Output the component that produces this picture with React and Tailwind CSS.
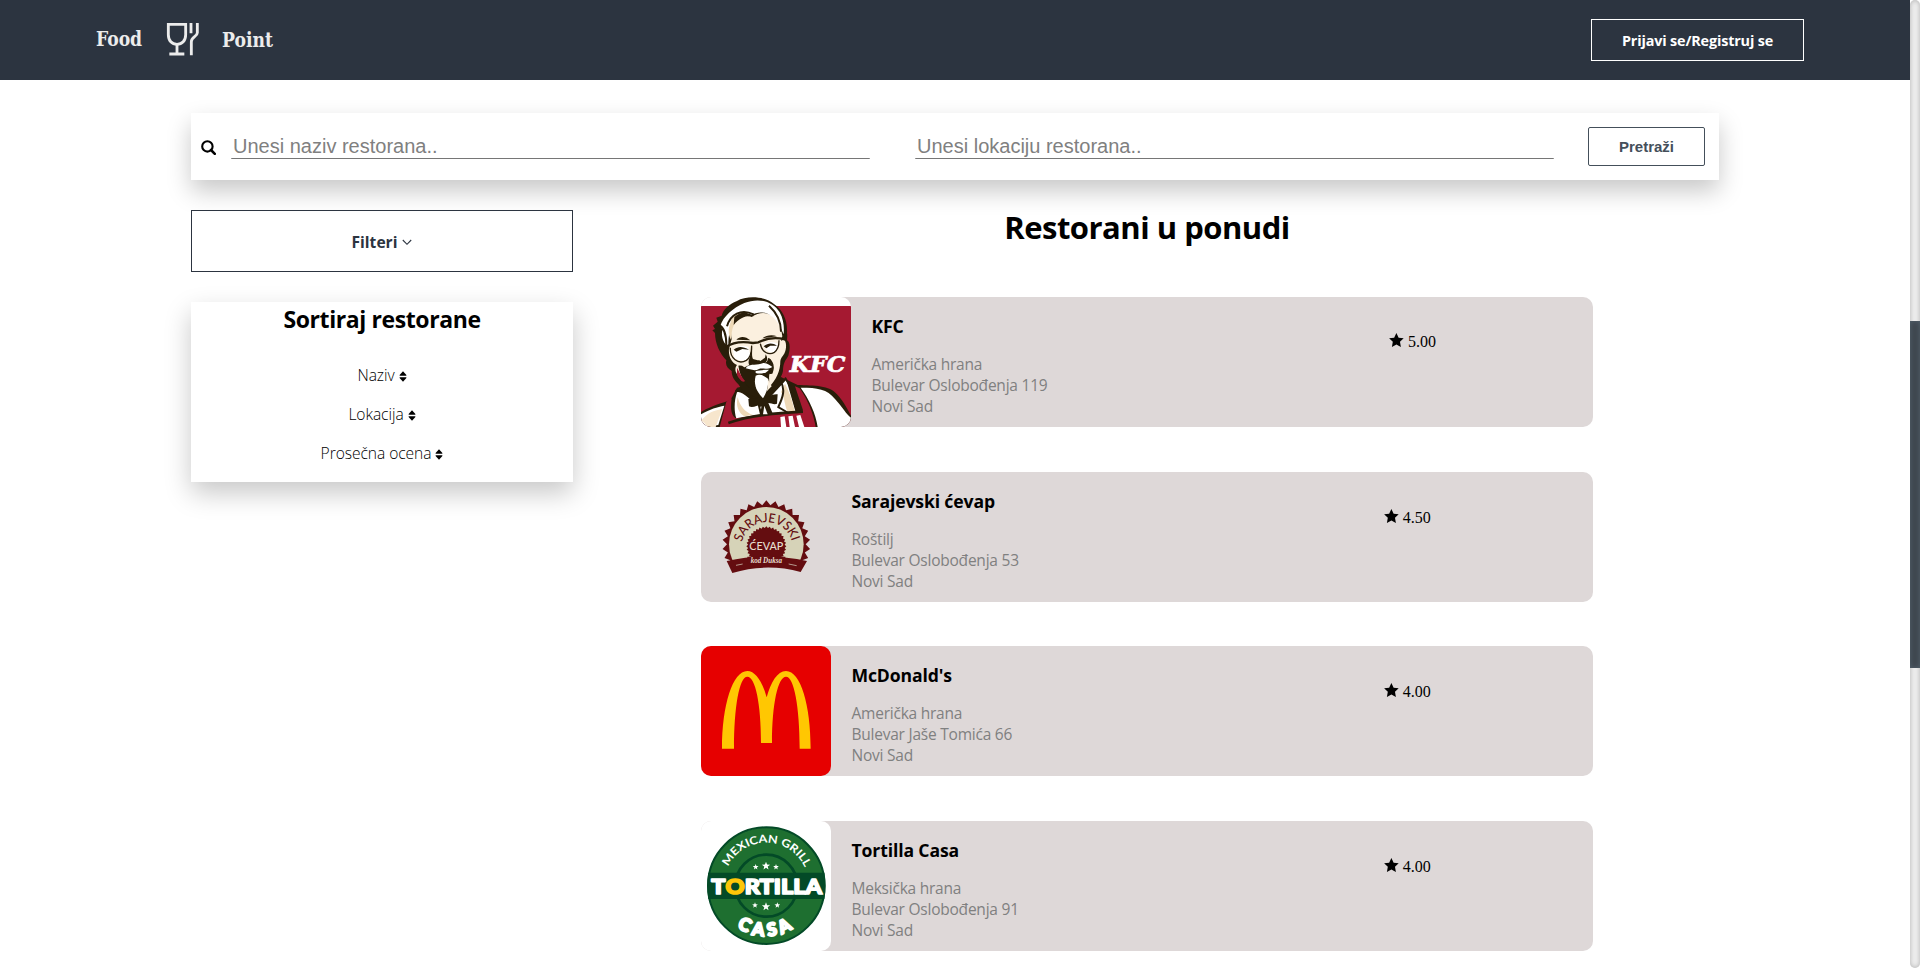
import React from "react";

function GlassLogo() {
  return (
    <svg viewBox="256 66 105 105" className="h-[35px] w-[35px] shrink-0" fill="none" stroke="#ececec" strokeWidth="8.5">
      <path d="M266 73H318V104C318 122 307 133 292 133C277 133 266 122 266 104Z" />
      <path d="M292 133V158M269 162H314" />
      <path d="M334 69V100M353 69V98C353 110 335 110 335 125V166" />
    </svg>
  );
}

function SearchIcon() {
  return (
    <svg viewBox="0 0 15 15" className="h-[15px] w-[15px] shrink-0 translate-y-[1px]" fill="none" stroke="#000" strokeWidth="2.1">
      <circle cx="6.4" cy="6.4" r="5.2" />
      <path d="M10 10L13.8 13.8" strokeWidth="2.5" strokeLinecap="round" />
    </svg>
  );
}

function SortIcon() {
  return (
    <svg viewBox="0 0 8 12" className="ml-[4px] h-[11px] w-[8px] shrink-0 translate-y-[1px]">
      <path d="M4 0.4L7.7 4.4Q8 5.1 7.3 5.1H0.7Q0 5.1 0.3 4.4Z" />
      <path d="M4 11.6L7.7 7.6Q8 6.9 7.3 6.9H0.7Q0 6.9 0.3 7.6Z" />
    </svg>
  );
}

function StarIcon() {
  return (
    <svg viewBox="0 0 26 25" className="h-[14px] w-[14.8px] shrink-0">
      <path d="M13 0L17 8.3L26 9.4L19.4 15.7L21 24.8L13 20.4L5 24.8L6.6 15.7L0 9.4L9 8.3Z" />
    </svg>
  );
}

function KfcLogo() {
  return (
    <svg viewBox="0 0 450 390" className="block h-[130px] w-[150px] shrink-0 rounded-[10px]">
      <rect width="450" height="390" fill="#fff" />
      <rect y="27" width="450" height="363" fill="#a51931" />
      {/* jacket */}
      <path d="M0 345C35 325 65 318 88 310L108 272L240 240L290 264C340 266 385 264 408 292C430 316 442 342 450 356V390H0Z" fill="#291e0a" />
      <path d="M0 352C28 336 48 330 70 326L52 384L0 390Z" fill="#fff" />
      <path d="M0 372C20 345 42 340 64 336L44 390H18C14 380 8 374 0 372Z" fill="#f7e6cd" />
      <path d="M299 272C350 272 378 276 402 306C424 330 436 352 450 362V390H350C344 350 326 310 299 272Z" fill="#fff" />
      {/* apron */}
      <path d="M76 314L92 304C88 336 90 352 104 364L290 346L306 340L282 268L296 274C322 312 338 352 344 390H56Z" fill="#a51931" />
      {/* shirt */}
      <path d="M108 286C120 278 150 312 180 330L256 248L284 346C220 348 160 352 106 364C98 340 100 310 108 286Z" fill="#fff" />
      <path d="M110 300C116 325 130 345 156 354L130 358C110 345 104 322 110 300ZM252 260C268 290 276 320 282 346L262 348C250 330 252 300 240 285Z" fill="#eed9b7" />
      <path d="M104 282C116 270 136 290 152 306L172 318L180 352M238 252C254 276 246 300 232 330L262 348M252 242C274 272 284 310 290 348" fill="none" stroke="#291e0a" strokeWidth="6" />
      <path d="M82 378C150 354 226 348 306 344" fill="none" stroke="#291e0a" strokeWidth="8" />
      {/* head silhouette */}
      <path d="M36 86L50 74L46 62L62 56C66 38 84 22 108 12C136 -4 190 -4 220 22C246 40 260 70 258 108C260 118 258 124 258 130C268 134 268 156 262 176C254 190 246 196 246 222C242 244 224 262 204 286L182 304C150 300 126 286 112 262C100 250 92 238 92 222C80 214 72 204 76 190C58 172 42 140 42 108L34 100L42 96Z" fill="#291e0a" />
      {/* face */}
      <path d="M92 126C86 98 94 72 112 58C124 58 140 54 152 60C168 48 186 46 200 50C226 58 240 82 244 118L240 132C252 122 258 138 254 158C250 176 240 178 238 192C238 222 226 248 204 270C204 256 206 240 202 232L214 226C220 210 214 192 206 184C198 202 186 198 174 190C162 196 152 200 140 206L128 212L122 242C104 234 98 216 108 204C90 196 82 176 84 156Z" fill="#fbf0df" />
      {/* hair */}
      <path d="M58 86C66 60 96 32 130 18C170 2 214 10 236 46C248 68 250 90 248 112C236 84 224 62 200 50C182 44 166 46 150 54C126 50 112 58 100 72C86 92 82 116 82 148C66 138 60 118 64 98Z" fill="#fff" />
      <path d="M88 78C92 60 106 48 132 46C118 56 106 68 100 82C92 96 92 112 90 128C80 112 82 94 88 78Z" fill="#eed9b7" />
      <path d="M54 84C70 92 76 110 76 144M78 88C88 52 120 34 158 52M204 26C226 46 240 72 240 104" fill="none" stroke="#291e0a" strokeWidth="6" />
      <path d="M100 60C118 42 142 44 158 58C136 54 116 62 98 84Z" fill="#291e0a" />
      {/* eyes and glasses */}
      <path d="M96 160C112 144 130 146 142 150L148 176C138 194 114 194 100 182ZM188 144C204 130 222 134 234 142L230 160C218 172 196 168 188 144Z" fill="#fff" />
      <path d="M74 150C98 134 124 132 156 138L172 136C194 124 216 120 250 126" fill="none" stroke="#291e0a" strokeWidth="7" />
      <path d="M88 152C86 184 112 204 136 190C148 182 152 166 152 146M178 140C182 166 204 176 220 166C232 158 234 142 234 130" fill="none" stroke="#291e0a" strokeWidth="4" />
      <path d="M98 158C112 146 126 148 144 158L124 156L106 164ZM188 148C202 136 216 138 228 146L208 146L196 154ZM106 128C118 116 134 118 148 130ZM184 124C196 114 214 112 228 118Z" fill="#291e0a" />
      {/* nose and smile */}
      <path d="M152 142C156 160 150 174 156 186L178 192L192 182L194 172C202 184 200 198 184 200L146 206C136 194 152 180 152 142ZM202 182C216 192 224 206 214 230L204 232C212 214 208 200 198 194Z" fill="#291e0a" />
      <path d="M112 206C124 204 132 210 138 222L166 226L204 222C206 236 204 250 198 262C192 246 178 240 162 240L162 280C140 274 118 248 112 206Z" fill="#291e0a" />
      <path d="M108 212C116 226 122 240 132 252C126 260 114 246 108 234Z" fill="#a51931" />
      <path d="M134 214C142 198 162 206 180 200C194 194 206 204 214 210C196 220 184 212 174 216C160 224 146 216 134 214Z" fill="#fff" />
      <path d="M164 222C176 220 190 218 204 218C198 228 178 232 164 228Z" fill="#fff" />
      {/* goatee */}
      <path d="M164 236C178 228 192 238 202 246C202 270 196 288 186 304C170 288 156 266 164 236Z" fill="#fff" />
      <path d="M200 246C202 264 200 276 196 284L212 268" fill="#fbf0df" />
      {/* bow tie */}
      <path d="M142 306C154 300 168 306 182 308C198 302 212 290 230 292L228 320C220 324 210 318 202 318L216 352H178L182 324C170 322 158 334 144 328Z" fill="#291e0a" />
      <path d="M190 326L200 352H186Z" fill="#fff" />
      {/* apron stripes */}
      <path d="M238 360L251 358L256 390H240ZM262 358L275 356L282 390H266ZM286 356L298 354L310 390H294Z" fill="#fff" />
      <text x="266" y="226" textLength="167" lengthAdjust="spacingAndGlyphs" fill="#fff" stroke="#fff" strokeWidth="2" className="font-['DejaVu_Serif'] text-[66px] font-bold italic">KFC</text>
    </svg>
  );
}

const TEETH = Array.from({ length: 60 }, (_, i) => {
  const a = (i * Math.PI * 2) / 60 - Math.PI / 2;
  const r = i % 2 ? 118 : 132;
  return `${(229 + r * Math.cos(a)).toFixed(1)},${(253 + r * Math.sin(a)).toFixed(1)}`;
}).join(" ");

const INNER_TEETH = Array.from({ length: 72 }, (_, i) => {
  const a = (i * Math.PI * 2) / 72;
  const r = i % 2 ? 55 : 60;
  return `${(229 + r * Math.cos(a)).toFixed(1)},${(259 + r * Math.sin(a)).toFixed(1)}`;
}).join(" ");

function SarajevskiLogo() {
  return (
    <svg viewBox="33 36 390 390" className="block h-[130px] w-[130px] shrink-0">
      <defs>
        <clipPath id="badgeTop"><path d="M80 100H380V300L345 308Q229 272 115 308L80 300Z" /></clipPath>
        <path id="sarajevskiArc" d="M156 246A77 77 0 0 1 306 246" />
      </defs>
      <g clipPath="url(#badgeTop)">
        <polygon points={TEETH} fill="#640d10" />
        <circle cx="229" cy="253" r="112" fill="#d6d3b8" />
        <polygon points={INNER_TEETH} fill="#640d10" />
      </g>
      <path d="M110 303Q229 276 351 303L332 336Q229 308 127 339Z" fill="#640d10" />
      <path d="M172 290H286V310H172Z" fill="#640d10" />
      <text fill="#640d10" className="font-['Lato'] text-[38px] font-medium">
        <textPath href="#sarajevskiArc" textLength="204" lengthAdjust="spacingAndGlyphs">SARAJEVSKI</textPath>
      </text>
      <text x="178" y="270" textLength="102" lengthAdjust="spacingAndGlyphs" fill="#e6dfcf" className="font-['Lato'] text-[36px] font-medium">ĆEVAP</text>
      <text x="182" y="310" textLength="94" lengthAdjust="spacingAndGlyphs" fill="#e6dfcf" className="font-['Liberation_Serif'] text-[25px] font-bold italic">kod Duksa</text>
      <path d="M138 316L158 312M296 312L320 317" stroke="#b59a8e" strokeWidth="3" />
    </svg>
  );
}

function McDonaldsLogo() {
  return (
    <svg viewBox="33 33 390 390" className="block h-[130px] w-[130px] shrink-0 rounded-[10px]">
      <rect x="33" y="33" width="390" height="390" fill="#e60000" />
      <path d="M96 341C96 210 128 108 172 108C197 108 218 142 230 187C242 142 262 108 288 108C332 108 362 210 362 341H329C329 215 312 125 288 125C264 125 246 205 246 324H213C213 205 196 125 172 125C148 125 132 215 132 341Z" fill="#ffc702" />
    </svg>
  );
}

const STARS = [[197, 171, 9], [228, 168, 13], [258, 171, 9], [195, 286, 9], [228, 290, 13], [262, 286, 9]];

function starPoints([cx, cy, r]) {
  return Array.from({ length: 10 }, (_, i) => {
    const a = (i * Math.PI) / 5 - Math.PI / 2;
    const d = i % 2 ? r * 0.42 : r;
    return `${(cx + d * Math.cos(a)).toFixed(1)},${(cy + d * Math.sin(a)).toFixed(1)}`;
  }).join(" ");
}

function TortillaLogo() {
  return (
    <svg viewBox="33 33 390 390" className="block h-[130px] w-[130px] shrink-0 rounded-[10px]">
      <defs>
        <path id="grillArc" d="M114 170A127 127 0 0 1 349 185" />
        <path id="casaArc" d="M128 341A152 152 0 0 0 328 341" />
      </defs>
      <rect x="33" y="33" width="390" height="390" fill="#fff" />
      <circle cx="229" cy="227" r="175" fill="#1e6f30" stroke="#034a27" strokeWidth="6" />
      <circle cx="229" cy="227" r="93" fill="#1e6f30" stroke="#034a27" strokeWidth="8" />
      <path d="M55 188H403Q409 227 403 267H55Q49 227 55 188Z" fill="#034a27" />
      {STARS.map((s) => <polygon key={s.join()} points={starPoints(s)} fill="#fff" />)}
      <text fill="#fff" className="font-['Lato'] text-[33px] font-bold">
        <textPath href="#grillArc" textLength="288" lengthAdjust="spacingAndGlyphs">MEXICAN GRILL</textPath>
      </text>
      <text x="64" y="251" textLength="332" lengthAdjust="spacingAndGlyphs" fill="#fff" stroke="#fff" strokeWidth="5" strokeLinejoin="round" className="font-['Lato'] text-[64px] font-black">
        T<tspan fill="#fdc708" stroke="#fdc708">O</tspan>RTILLA
      </text>
      <text fill="#fff" stroke="#fff" strokeWidth="6" strokeLinejoin="round" className="font-['Lato'] text-[54px] font-black tracking-[12px]">
        <textPath href="#casaArc" startOffset="17">CASA</textPath>
      </text>
    </svg>
  );
}

const RESTAURANTS = [
  { name: "KFC", kind: "Američka hrana", street: "Bulevar Oslobođenja 119", city: "Novi Sad", rating: "5.00", Logo: KfcLogo },
  { name: "Sarajevski ćevap", kind: "Roštilj", street: "Bulevar Oslobođenja 53", city: "Novi Sad", rating: "4.50", Logo: SarajevskiLogo },
  { name: "McDonald's", kind: "Američka hrana", street: "Bulevar Jaše Tomića 66", city: "Novi Sad", rating: "4.00", Logo: McDonaldsLogo },
  { name: "Tortilla Casa", kind: "Meksička hrana", street: "Bulevar Oslobođenja 91", city: "Novi Sad", rating: "4.00", Logo: TortillaLogo },
];

function RestaurantCard({ name, kind, street, city, rating, Logo }) {
  return (
    <article className="group flex h-[130px] w-[892px] rounded-[10px] bg-[#ded8d8]">
      <Logo />
      <div className="grid flex-1 grid-cols-[72.55%_1fr]">
        <div className="pt-[17px] pl-[20.5px]">
          <h3 className="text-[17.6px] leading-6 font-bold tracking-[-0.13px]">{name}</h3>
          <div className="mt-4 text-[15.5px] leading-[21px] tracking-[-0.23px] text-[#808080]">
            <p>{kind}</p>
            <p>{street}</p>
            <p>{city}</p>
          </div>
        </div>
        <div className="flex items-start pt-[37px] group-first:pt-[35.5px]">
          <StarIcon />
          <span className="ml-[4px] font-['Liberation_Serif',serif] text-base leading-[18px]">{rating}</span>
        </div>
      </div>
    </article>
  );
}

const SHADOW = "shadow-[0_11px_25px_0_rgba(0,0,0,0.22)]";

export default function App() {
  return (
    <div className="flex h-[968px] overflow-hidden bg-white font-['Open_Sans',sans-serif] text-black">
      <div className="w-[1910px] shrink-0">
        <header className="flex h-20 items-center justify-between bg-[#2c3440] pr-[106px] pl-24">
          <div className="flex items-center font-['DejaVu_Serif_Condensed','DejaVu_Serif',serif] text-[21px] leading-[30px] font-bold text-[#ececec]">
            <span className="w-[48px] origin-left -translate-y-px scale-x-[0.91] whitespace-nowrap">Food</span>
            <div className="mr-[22px] ml-[21px] -mt-px"><GlassLogo /></div>
            <span className="w-[54px] origin-left scale-x-[0.91] whitespace-nowrap">Point</span>
          </div>
          <button className="h-[42px] w-[213px] border border-white pt-[2px] text-[14.4px] font-bold tracking-[-0.15px] text-white">
            Prijavi se/Registruj se
          </button>
        </header>

        <main className="mx-auto w-[1528px] pt-[33px]">
          <section className={`flex h-[67px] items-center bg-white pr-[14px] pl-[10px] ${SHADOW}`}>
            <SearchIcon />
            <input placeholder="Unesi naziv restorana.." className="ml-[15px] h-[27px] w-[639px] -translate-y-px rounded-[1px] border-b border-[#767676] px-[2px] pt-[2px] font-['Liberation_Sans',sans-serif] text-[20px] outline-none placeholder:text-[#808080]" />
            <input placeholder="Unesi lokaciju restorana.." className="ml-[45px] h-[27px] w-[639px] -translate-y-px rounded-[1px] border-b border-[#767676] px-[2px] pt-[2px] font-['Liberation_Sans',sans-serif] text-[20px] outline-none placeholder:text-[#808080]" />
            <button className="ml-auto h-[39px] w-[117px] rounded-[2px] border border-[#444f5a] pt-px font-['Liberation_Sans',sans-serif] text-[15px] font-bold text-[#444f5a]">
              Pretraži
            </button>
          </section>

          <div className="flex">
            <aside className="w-[382px] pt-[30px]">
              <button className="flex h-[62px] w-full items-center justify-center border border-[#2c3440] pt-[3px] text-[15.6px] font-bold text-[#2c3440]">
                Filteri
                <svg viewBox="0 0 10 7" className="ml-[5px] h-[7px] w-[10px]" fill="none" stroke="#2c3440" strokeWidth="1.1">
                  <path d="M0.8 1L5 5.3L9.2 1" />
                </svg>
              </button>
              <section className={`mt-[30px] h-[180px] bg-white pt-px text-center ${SHADOW}`}>
                <h2 className="text-[23px] leading-8 font-bold tracking-[-0.4px]">Sortiraj restorane</h2>
                <ul className="mt-[30px] flex flex-col gap-[18px] text-[15.6px] leading-[21px] font-light tracking-[-0.06px]">
                  {["Naziv", "Lokacija", "Prosečna ocena"].map((label) => (
                    <li key={label} className="flex items-center justify-center">
                      {label}
                      <SortIcon />
                    </li>
                  ))}
                </ul>
              </section>
            </aside>

            <section className="w-[1146px] pt-[25px] pl-[128px]">
              <h1 className="w-[892px] text-center text-[31px] leading-[44px] font-bold tracking-[-0.5px]">Restorani u ponudi</h1>
              <div className="mt-12 flex flex-col gap-[44.67px]">
                {RESTAURANTS.map((r) => <RestaurantCard key={r.name} {...r} />)}
              </div>
            </section>
          </div>
        </main>
      </div>

      <div className="w-[10px] shrink-0 rounded-[10px] bg-[#eeeeee] pt-[321px] shadow-[inset_0_0_5px_#b0b0b0]">
        <div className="h-[347px] bg-[#3f4750] shadow-[inset_0_0_5px_#54636d]" />
      </div>
    </div>
  );
}
